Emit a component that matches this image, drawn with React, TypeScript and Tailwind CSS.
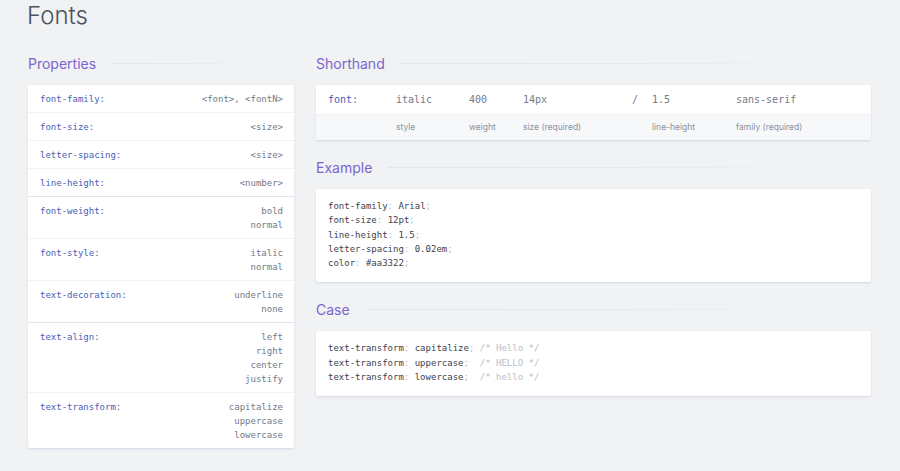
const mono = { fontFamily: '"DejaVu Sans Mono", "Liberation Mono", monospace' };

type Row = { k: string; v: string[] };

const groups: Row[][] = [
  [
    { k: "font-family:", v: ["<font>, <fontN>"] },
    { k: "font-size:", v: ["<size>"] },
    { k: "letter-spacing:", v: ["<size>"] },
    { k: "line-height:", v: ["<number>"] },
  ],
  [
    { k: "font-weight:", v: ["bold", "normal"] },
    { k: "font-style:", v: ["italic", "normal"] },
    { k: "text-decoration:", v: ["underline", "none"] },
  ],
  [
    { k: "text-align:", v: ["left", "right", "center", "justify"] },
    { k: "text-transform:", v: ["capitalize", "uppercase", "lowercase"] },
  ],
];

function Heading({ children }: { children: React.ReactNode }) {
  return (
    <div className="flex items-center gap-4 h-[22px] mb-[11px]">
      <h2 className="text-[14px] text-[#7b65cc] whitespace-nowrap">{children}</h2>
      <div className="flex-1 h-px bg-gradient-to-r from-[#e1e4ea] via-[#e6e8ed] to-transparent mr-[40px]" />
    </div>
  );
}

const card = "bg-white shadow-[0_1px_2px_rgba(120,140,170,0.25)] rounded-[2px]";

function Code({ lines }: { lines: [string, string, string?][] }) {
  return (
    <div className={`${card} pl-3 pt-[10px] pb-[12px] text-[9px] leading-[14.25px] text-[#3d424d]`} style={mono}>
      {lines.map(([p, v, c], i) => (
        <div key={i} className="whitespace-pre">
          {p}
          <span className="text-[#b3b8c1]">: </span>
          {v}
          <span className="text-[#b3b8c1]">;</span>
          {c && <span className="text-[#b8bdc6]">{c}</span>}
        </div>
      ))}
    </div>
  );
}

export default function App() {
  return (
    <div className="min-h-screen bg-[#f1f2f4] pl-[28px] pr-[29px]" style={{ fontFamily: 'Inter, "Noto Sans", sans-serif' }}>
      <h1 className="text-[24px] font-light text-[#4a5160] leading-[32px] h-[34px] -ml-px">Fonts</h1>
      <div className="flex gap-[22px] mt-[18px]">
        <div className="w-[266px] shrink-0">
          <Heading>Properties</Heading>
          <div className={`${card} text-[9px] leading-[14px]`} style={mono}>
            {groups.map((g, gi) => (
              <div key={gi} className={gi > 0 ? "border-t border-[#e0e3e8]" : ""}>
                {g.map((r, ri) => (
                  <div
                    key={r.k}
                    className={`flex justify-between items-start pl-3 pr-[11px] py-[6.5px] ${ri > 0 ? "border-t border-[#f1f2f5]" : ""}`}
                  >
                    <span className="text-[#4660b4] leading-[14px]">{r.k}</span>
                    <div className="text-right text-[#717988] leading-[14px]">
                      {r.v.map((v) => (
                        <div key={v} className="h-[14px]">{v}</div>
                      ))}
                    </div>
                  </div>
                ))}
              </div>
            ))}
          </div>
        </div>

        <div className="flex-1">
          <Heading>Shorthand</Heading>
          <div className={card}>
            <div
              className="grid grid-cols-[68px_73px_54px_109px_20px_84px_1fr] pl-3 h-[29px] items-center text-[10px] text-[#737b89]"
              style={mono}
            >
              <span className="text-[#4660b4]">font:</span>
              <span>italic</span>
              <span>400</span>
              <span>14px</span>
              <span>/</span>
              <span>1.5</span>
              <span>sans-serif</span>
            </div>
            <div className="grid grid-cols-[68px_73px_54px_109px_20px_84px_1fr] pl-3 h-[26px] items-center text-[8.5px] text-[#8b929e] bg-[#f7f8fa] border-t border-[#eef0f3]">
              <span />
              <span>style</span>
              <span>weight</span>
              <span>size (required)</span>
              <span />
              <span>line-height</span>
              <span>family (required)</span>
            </div>
          </div>

          <div className="mt-[16px]">
            <Heading>Example</Heading>
            <Code
              lines={[
                ["font-family", "Arial"],
                ["font-size", "12pt"],
                ["line-height", "1.5"],
                ["letter-spacing", "0.02em"],
                ["color", "#aa3322"],
              ]}
            />
          </div>

          <div className="mt-[16px]">
            <Heading>Case</Heading>
            <Code
              lines={[
                ["text-transform", "capitalize", " /* Hello */"],
                ["text-transform", "uppercase", "  /* HELLO */"],
                ["text-transform", "lowercase", "  /* hello */"],
              ]}
            />
          </div>
        </div>
      </div>
    </div>
  );
}
